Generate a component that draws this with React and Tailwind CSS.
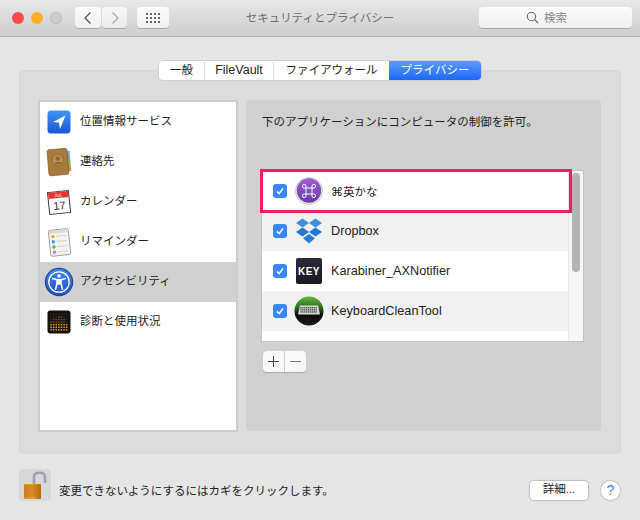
import React from "react";

const FONT = "font-['Liberation_Sans','Noto_Sans_CJK_JP',sans-serif]";

function LocationIcon() {
  return (
    <svg width="24" height="24" viewBox="0 0 24 24">
      <defs>
        <linearGradient id="loc" x1="0" y1="0" x2="0" y2="1">
          <stop offset="0" stopColor="#3d96f5" />
          <stop offset="1" stopColor="#1b55d2" />
        </linearGradient>
      </defs>
      <rect x="0.5" y="0.5" width="23" height="23" rx="3.5" fill="url(#loc)" />
      <path d="M18.5 5.5 L6 12 L12 12.5 L13 19 Z" fill="#fff" />
    </svg>
  );
}

function ContactsIcon() {
  return (
    <svg width="28" height="32" viewBox="0 0 28 32">
      <g transform="rotate(-5 14 16)">
        <rect x="21" y="6" width="4.5" height="7" fill="#6aa6dd" />
        <rect x="21" y="13" width="4.5" height="7" fill="#82b95b" />
        <rect x="21" y="20" width="4.5" height="6" fill="#dd9a3d" />
        <rect x="3" y="3" width="20" height="26" rx="2" fill="#a87a3e" />
        <rect x="3" y="3" width="20" height="26" rx="2" fill="none" stroke="#7d5927" strokeWidth="0.7" />
        <circle cx="13" cy="14" r="5.8" fill="#b98c51" stroke="#8f6732" strokeWidth="0.8" />
        <circle cx="13" cy="12.5" r="2.1" fill="#8f6732" />
        <path d="M9.2 18 C9.8 15.4 16.2 15.4 16.8 18 Z" fill="#8f6732" />
      </g>
    </svg>
  );
}

function CalendarIcon() {
  return (
    <svg width="28" height="28" viewBox="0 0 28 28">
      <g transform="rotate(-6 14 14)">
        <rect x="3" y="3" width="22" height="23" fill="#3a3a3a" />
        <rect x="4" y="4" width="20" height="21" fill="#fbfbfb" />
        <rect x="4" y="4" width="20" height="6" fill="#e5332e" />
        <text x="14" y="8.8" textAnchor="middle" fontSize="4.5" fill="#fff" fontFamily="Liberation Sans">JUL</text>
        <text x="14" y="21.5" textAnchor="middle" fontSize="11" fill="#333" fontFamily="Liberation Sans">17</text>
      </g>
    </svg>
  );
}

function RemindersIcon() {
  const dots = ["#eda537", "#3f9be6", "#63b347", "#b67ad6"];
  return (
    <svg width="26" height="29" viewBox="0 0 26 29">
      <g transform="rotate(-6 13 14)">
        <rect x="3.5" y="1.5" width="20" height="26" rx="1.5" fill="#f4f3ef" stroke="#8c8c8c" strokeWidth="0.8" />
        <rect x="3.9" y="1.9" width="19.2" height="3" fill="#dcdcd8" />
        {dots.map((c, i) => (
          <g key={c}>
            <circle cx="7.5" cy={8 + i * 5.2} r="1.7" fill={c} />
            <path d={`M10.5 ${8 + i * 5.2} H21`} stroke="#c6c6c6" strokeWidth="0.7" />
          </g>
        ))}
      </g>
    </svg>
  );
}

function AccessibilityIcon() {
  return (
    <svg width="30" height="30" viewBox="0 0 30 30">
      <defs>
        <linearGradient id="acc" x1="0" y1="0" x2="0" y2="1">
          <stop offset="0" stopColor="#3f86ef" />
          <stop offset="1" stopColor="#1f4fc8" />
        </linearGradient>
      </defs>
      <circle cx="15" cy="15" r="14.2" fill="#1d3f95" />
      <circle cx="15" cy="15" r="13.2" fill="url(#acc)" />
      <circle cx="15" cy="15" r="10.2" fill="none" stroke="#fff" strokeWidth="1.3" />
      <circle cx="15" cy="9" r="1.8" fill="#fff" />
      <path d="M8.6 11.5 L13 12.8 V16.5 L11.6 22.3 M21.4 11.5 L17 12.8 V16.5 L18.4 22.3 M13 12.8 H17 M13 16.5 L15 17 L17 16.5" fill="none" stroke="#fff" strokeWidth="1.5" strokeLinecap="round" strokeLinejoin="round" />
      <rect x="13" y="12.6" width="4" height="4.2" fill="#fff" />
    </svg>
  );
}

function DiagnosticsIcon() {
  const cells = [];
  const heights = [4, 5, 5, 6, 6, 5, 3];
  for (let c = 0; c < 7; c++) {
    for (let r = 0; r < 7; r++) {
      const on = 7 - r <= heights[c];
      cells.push(
        <rect key={`${c}-${r}`} x={3.3 + c * 2.6} y={3.5 + r * 2.6} width="1.5" height="1.5" fill={on ? (r > 3 ? "#e89c1f" : "#7a5314") : "#33261a"} />
      );
    }
  }
  return (
    <svg width="24" height="24" viewBox="0 0 24 24">
      <rect x="0.5" y="0.5" width="23" height="23" rx="3" fill="#17110c" />
      {cells}
    </svg>
  );
}

function EikanaIcon() {
  return (
    <svg width="28" height="28" viewBox="0 0 28 28">
      <defs>
        <linearGradient id="eik" x1="0" y1="0" x2="0" y2="1">
          <stop offset="0" stopColor="#a35ad6" />
          <stop offset="1" stopColor="#6a3aa8" />
        </linearGradient>
      </defs>
      <circle cx="14" cy="14" r="13.6" fill="#e8e8e8" stroke="#b4b4b4" strokeWidth="0.6" />
      <circle cx="14" cy="13.5" r="12.2" fill="url(#eik)" />
      <path d="M11 11 H17 V17 H11 Z M11 11 V9.2 A1.8 1.8 0 1 0 9.2 11 H11 M17 11 V9.2 A1.8 1.8 0 1 1 18.8 11 H17 M11 17 V18.8 A1.8 1.8 0 1 1 9.2 17 H11 M17 17 V18.8 A1.8 1.8 0 1 0 18.8 17 H17" fill="none" stroke="#fff" strokeWidth="1" />
    </svg>
  );
}

function DropboxIcon() {
  return (
    <svg width="28" height="28" viewBox="0 0 28 28">
      <path d="M7.5 1.5 L14 6 L7.5 10.5 L1 6 Z" fill="#3f8fdc" />
      <path d="M20.5 1.5 L27 6 L20.5 10.5 L14 6 Z" fill="#3f8fdc" />
      <path d="M7.5 10.5 L14 15 L7.5 19.5 L1 15 Z" fill="#1f78d1" />
      <path d="M20.5 10.5 L27 15 L20.5 19.5 L14 15 Z" fill="#1f78d1" />
      <path d="M14 17 L20 21.3 L14 26.5 L8 21.3 Z" fill="#2a80d6" />
    </svg>
  );
}

function KeyIcon() {
  return (
    <div className="w-[26px] h-[26px] rounded-[2px] bg-gradient-to-b from-[#2d2838] to-[#1b1824] flex items-center justify-center text-white text-[10px] font-bold tracking-[0.5px] font-['Liberation_Sans',sans-serif]">
      KEY
    </div>
  );
}

function KeyboardCleanIcon() {
  const keys = [];
  for (let r = 0; r < 3; r++) {
    for (let c = 0; c < 9; c++) {
      keys.push(<rect key={`${r}-${c}`} x={6.3 + c * 1.9} y={11 + r * 2.1} width="1.4" height="1.5" fill="#555" />);
    }
  }
  return (
    <svg width="30" height="30" viewBox="0 0 30 30">
      <defs>
        <linearGradient id="kb" x1="0" y1="0" x2="0" y2="1">
          <stop offset="0" stopColor="#62b53e" />
          <stop offset="0.38" stopColor="#2e6f1d" />
          <stop offset="0.62" stopColor="#0b0b0b" />
          <stop offset="1" stopColor="#1a1a1a" />
        </linearGradient>
      </defs>
      <circle cx="15" cy="15" r="14.5" fill="url(#kb)" />
      <path d="M6 9.5 H24 L26 18.5 H4 Z" fill="#d9dcd6" />
      {keys}
    </svg>
  );
}

function LockIcon() {
  return (
    <svg width="32" height="32" viewBox="0 0 32 32">
      <defs>
        <linearGradient id="lockBody" x1="0" y1="0" x2="1" y2="0">
          <stop offset="0" stopColor="#d98a22" />
          <stop offset="0.5" stopColor="#e9a03c" />
          <stop offset="1" stopColor="#b56a12" />
        </linearGradient>
      </defs>
      <path d="M15 16 V7.5 C15 2.5 26 2.5 26 7.5 V14" fill="none" stroke="#9aa3ad" strokeWidth="2.6" />
      <rect x="5" y="15" width="17" height="15" rx="1" fill="url(#lockBody)" />
      {[17, 19, 21, 23, 25, 27].map((y) => (
        <path key={y} d={`M5 ${y} H22`} stroke="#b4690f" strokeWidth="0.7" />
      ))}
    </svg>
  );
}

const sideItems = [
  { label: "位置情報サービス", icon: <LocationIcon /> },
  { label: "連絡先", icon: <ContactsIcon /> },
  { label: "カレンダー", icon: <CalendarIcon /> },
  { label: "リマインダー", icon: <RemindersIcon /> },
  { label: "アクセシビリティ", icon: <AccessibilityIcon />, active: true },
  { label: "診断と使用状況", icon: <DiagnosticsIcon /> },
];

const apps = [
  {
    label: (
      <>
        <span className="font-['DejaVu_Sans',sans-serif] text-[12px]">⌘</span>英かな
      </>
    ),
    icon: <EikanaIcon />,
    cls: "",
  },
  { label: "Dropbox", icon: <DropboxIcon />, cls: "text-[12.7px]" },
  { label: "Karabiner_AXNotifier", icon: <KeyIcon />, cls: "text-[12.7px]" },
  { label: "KeyboardCleanTool", icon: <KeyboardCleanIcon />, cls: "text-[12.7px]" },
];

function Check() {
  return (
    <div className="w-[14px] h-[14px] rounded-[3px] bg-[#3b88f5] flex items-center justify-center">
      <svg width="10" height="10" viewBox="0 0 10 10">
        <path d="M2 5.4 L4.2 7.6 L8 2.4" fill="none" stroke="#fff" strokeWidth="1.5" />
      </svg>
    </div>
  );
}

const tabClass = "h-full flex items-center justify-center border-r border-[#dedede] text-[#222]";

export default function App() {
  return (
    <div className={`w-[640px] h-[520px] bg-[#e5e5e5] flex flex-col overflow-hidden text-[11.5px] text-[#222] ${FONT}`}>
      {/* title bar */}
      <div className="h-[37px] shrink-0 bg-gradient-to-b from-[#e8e8e8] to-[#cdcdcd] border-b border-[#b4b4b4] flex items-center pl-3 pr-2 pb-[1px]">
        <div className="w-3 h-3 rounded-full bg-[#fc4a46]" />
        <div className="w-3 h-3 rounded-full bg-[#fdb024] ml-[7px]" />
        <div className="w-3 h-3 rounded-full bg-[#cdcdcd] border border-[#b9b9b9] ml-[7px]" />
        <div className="flex ml-[13px] gap-[1px]">
          <div className="w-[26px] h-[21px] rounded-[4px] bg-gradient-to-b from-[#fcfcfc] to-[#f0f0f0] shadow-[0_1px_0_#aaa] flex items-center justify-center">
            <svg width="10" height="14" viewBox="0 0 10 14"><path d="M7.5 1.5 L2 7 L7.5 12.5" fill="none" stroke="#555" strokeWidth="1.3" /></svg>
          </div>
          <div className="w-[25px] h-[21px] rounded-[4px] bg-gradient-to-b from-[#f7f7f7] to-[#ebebeb] shadow-[0_1px_0_#aaa] flex items-center justify-center">
            <svg width="10" height="14" viewBox="0 0 10 14"><path d="M2.5 1.5 L8 7 L2.5 12.5" fill="none" stroke="#a9a9a9" strokeWidth="1.3" /></svg>
          </div>
        </div>
        <div className="w-[32px] h-[21px] ml-[10px] rounded-[4px] bg-gradient-to-b from-[#fcfcfc] to-[#f0f0f0] shadow-[0_1px_0_#aaa] flex items-center justify-center">
          <div className="grid grid-cols-4 gap-x-[2px] gap-y-[2px]">
            {Array.from({ length: 12 }).map((_, i) => (
              <div key={i} className="w-[2px] h-[2px] bg-[#666]" />
            ))}
          </div>
        </div>
        <div className="w-[302px] mt-[3px] text-center text-[#6e6e6e]">セキュリティとプライバシー</div>
        <div className="w-[153px] h-[21px] rounded-[4px] bg-gradient-to-b from-[#fbfbfb] to-[#f0f0f0] shadow-[0_1px_0_#aaa] flex items-center justify-center gap-[5px] pr-[18px] text-[#8a8a8a] ml-auto">
          <svg width="13" height="13" viewBox="0 0 13 13">
            <circle cx="5.5" cy="5.5" r="4.2" fill="none" stroke="#666" strokeWidth="1.1" />
            <path d="M8.6 8.6 L12 12" stroke="#666" strokeWidth="1.2" />
          </svg>
          <span className="mt-[2px]">検索</span>
        </div>
      </div>

      {/* tabs */}
      <div className="relative z-10 mt-6 h-5 flex justify-center">
        <div className="flex h-[19px] rounded-[4px] bg-white shadow-[0_0_0_1px_#d0d0d0] overflow-hidden">
          <div className={`${tabClass} w-[46px]`}>一般</div>
          <div className={`${tabClass} w-[69px] text-[12.5px]`}>FileVault</div>
          <div className={`${tabClass} w-[115px] border-r-0`}>ファイアウォール</div>
          <div className="w-[92px] h-full flex items-center justify-center text-white bg-gradient-to-b from-[#5a9cfd] to-[#1f66f5]">プライバシー</div>
        </div>
      </div>

      {/* main panel */}
      <div className="mx-[19px] -mt-[11px] h-[384px] rounded-[4px] bg-[#dcdcdc] border border-[#d6d6d6] pt-[29px] px-[18px] flex gap-[8px]">
        <div className="w-[200px] h-[332px] bg-white border-2 border-[#cccccc] flex flex-col">
          {sideItems.map((item) => (
            <div key={item.label} className={`h-10 flex items-center shrink-0 ${item.active ? "bg-[#d0d0d0]" : ""}`}>
              <div className="w-[37px] flex items-center justify-center">{item.icon}</div>
              <span className="ml-[3px]">{item.label}</span>
            </div>
          ))}
        </div>

        <div className="w-[355px] h-[331px] rounded-[4px] bg-[#d0d0d0] px-[15px] flex flex-col">
          <div className="mt-[14px] ml-[1px] leading-4">下のアプリケーションにコンピュータの制御を許可。</div>
          <div className="relative mt-[40px] w-[323px] h-[172px] bg-white border border-[#c2c2c2] flex">
            <div className="flex-1 flex flex-col">
              {apps.map((app, i) => (
                <div key={i} className={`h-10 shrink-0 flex items-center ${i % 2 === 1 ? "bg-[#f1f1f1]" : "bg-white"}`}>
                  <div className="ml-[11px]"><Check /></div>
                  <div className="w-[30px] ml-[7px] flex items-center justify-center">{app.icon}</div>
                  <span className={`ml-[7px] mt-[2px] ${app.cls}`}>{app.label}</span>
                </div>
              ))}
            </div>
            <div className="w-[15px] bg-[#f6f6f6] border-l border-[#e6e6e6] pl-[3px] pt-[2px]">
              <div className="w-2 h-[99px] rounded-full bg-[#b4b4b4]" />
            </div>
            {/* red annotation box */}
            <div className="absolute left-[-2px] top-[-2px] w-[312px] h-[44px] border-[3px] border-[#fb1a60]" />
          </div>
          <div className="mt-[9px] ml-[2px] w-[43px] h-[21px] rounded-[4px] bg-[#f8f8f8] shadow-[0_1px_1px_#aaa] flex">
            <div className="w-[22px] border-r border-[#cfcfcf] flex items-center justify-center">
              <svg width="13" height="13" viewBox="0 0 13 13"><path d="M6.5 1 V12 M1 6.5 H12" stroke="#444" strokeWidth="1" /></svg>
            </div>
            <div className="flex-1 flex items-center justify-center">
              <svg width="13" height="13" viewBox="0 0 13 13"><path d="M1 6.5 H12" stroke="#777" strokeWidth="1" /></svg>
            </div>
          </div>
        </div>
      </div>

      {/* footer */}
      <div className="mt-[15px] mx-[19px] h-8 flex items-center">
        <div className="w-8 h-8 rounded-[4px] bg-[#d8d8d8]"><LockIcon /></div>
        <span className="ml-2 mt-[13px]">変更できないようにするにはカギをクリックします。</span>
        <div className="ml-auto mt-[10px] w-[58px] h-[19px] rounded-[4px] bg-white shadow-[0_0_1px_1px_#bcbcbc] flex items-center justify-center">詳細...</div>
        <div className="ml-[13px] mr-[1px] mt-[10px] w-[19px] h-[19px] rounded-full bg-white shadow-[0_0_1px_1px_#c4c4c4] flex items-center justify-center text-[#3f83f5] text-[14px]">?</div>
      </div>
    </div>
  );
}
